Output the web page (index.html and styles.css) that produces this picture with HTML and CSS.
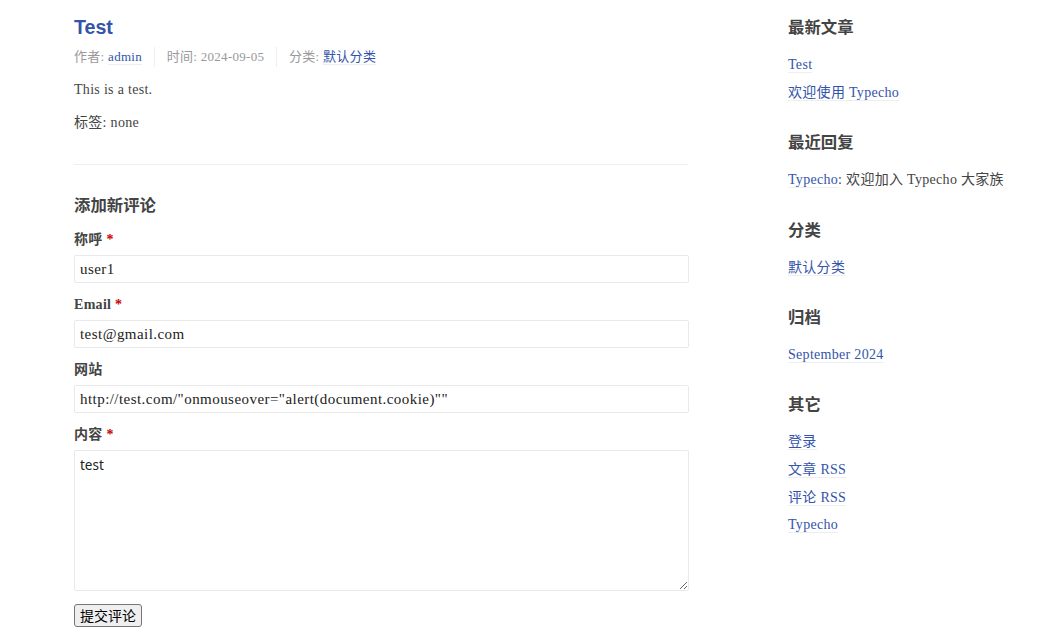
FILE: index.html
```html
<!DOCTYPE html>
<html lang="zh-CN">
<head>
<meta charset="utf-8">
<title>Test</title>
<link rel="stylesheet" href="styles.css">
</head>
<body>
<div class="container">
  <div class="main">
    <article class="post">
      <h2 class="post-title"><a href="#">Test</a></h2>
      <ul class="post-meta">
        <li>作者: <a href="#">admin</a></li>
        <li>时间: 2024-09-05</li>
        <li>分类: <a href="#">默认分类</a></li>
      </ul>
      <div class="post-content"><p>This is a test.</p></div>
      <p class="tags">标签: none</p>
    </article>
    <div class="respond">
      <h3 class="respond-title">添加新评论</h3>
      <form class="comment-form">
        <p class="field"><label class="required">称呼</label><input class="text" type="text" value="user1"></p>
        <p class="field"><label class="required">Email</label><input class="text" type="text" value="test@gmail.com"></p>
        <p class="field"><label>网站</label><input class="text" type="text" value="http://test.com/&quot;onmouseover=&quot;alert(document.cookie)&quot;&quot;"></p>
        <p class="field field-last"><label class="required">内容</label><textarea class="textarea">test</textarea></p>
        <p class="field"><button type="button" class="submit">提交评论</button></p>
      </form>
    </div>
  </div>
  <aside class="secondary">
    <section class="widget">
      <h3 class="widget-title">最新文章</h3>
      <ul class="widget-list">
        <li><a href="#">Test</a></li>
        <li><a href="#">欢迎使用 Typecho</a></li>
      </ul>
    </section>
    <section class="widget">
      <h3 class="widget-title">最近回复</h3>
      <ul class="widget-list">
        <li><a href="#">Typecho</a>: 欢迎加入 Typecho 大家族</li>
      </ul>
    </section>
    <section class="widget">
      <h3 class="widget-title">分类</h3>
      <ul class="widget-list">
        <li><a href="#">默认分类</a></li>
      </ul>
    </section>
    <section class="widget">
      <h3 class="widget-title">归档</h3>
      <ul class="widget-list">
        <li><a href="#">September 2024</a></li>
      </ul>
    </section>
    <section class="widget">
      <h3 class="widget-title">其它</h3>
      <ul class="widget-list">
        <li><a href="#">登录</a></li>
        <li><a href="#">文章 RSS</a></li>
        <li><a href="#">评论 RSS</a></li>
        <li><a href="#">Typecho</a></li>
      </ul>
    </section>
  </aside>
</div>
</body>
</html>
```

FILE: styles.css
```css
html, body {
  margin: 0;
  padding: 0;
  background: #fff;
}
body {
  color: #444;
  font-family: "Liberation Serif", "Noto Sans CJK SC", serif;
  font-size: 14px;
  letter-spacing: 0.3px;
}
a {
  color: #3354AA;
  text-decoration: none;
}
ul {
  list-style: none;
  margin: 0;
  padding: 0;
}
.container {
  display: grid;
  grid-template-columns: 614px 240px;
  column-gap: 100px;
  padding-left: 74px;
}
.post {
  padding-top: 15px;
  padding-bottom: 31px;
  border-bottom: 1px solid #EEE;
}
.post-title {
  margin: 0 0 8px;
  font-family: "Liberation Sans", "Noto Sans CJK SC", sans-serif;
  font-size: 19.6px;
  line-height: 24px;
  letter-spacing: 0;
}
.post-meta {
  color: #999;
  font-size: 13px;
  line-height: 20px;
}
.post-meta li {
  display: inline-block;
  margin-right: 8px;
  padding-left: 12px;
  border-left: 1px solid #EEE;
}
.post-meta li:first-child {
  padding-left: 0;
  border-left: 0;
}
.post-meta a, .widget-list a {
  border-bottom: 1px solid #EEE;
}
.post-content p, .tags {
  margin: 12px 0 0;
  line-height: 21px;
}
.respond-title {
  margin: 28px 0 13px;
  font-family: "Liberation Sans", "Noto Sans CJK SC", sans-serif;
  font-size: 16.4px;
  line-height: 24px;
  letter-spacing: 0;
}
.comment-form .field {
  margin: 0 0 12px;
}
.comment-form .field-last {
  margin-bottom: 13px;
}
.comment-form label {
  display: block;
  font-weight: bold;
  line-height: 20px;
  margin-bottom: 5px;
}
.required::after {
  content: " *";
  color: #C00;
}
.text, .textarea {
  display: block;
  box-sizing: border-box;
  width: 615px;
  margin: 0;
  padding: 5px;
  border: 1px solid #E9E9E9;
  border-radius: 2px;
  background: #fff;
  color: #222;
  outline: none;
}
.text {
  height: 28px;
  font-family: "Liberation Serif", "Noto Sans CJK SC", serif;
  font-size: 15px;
  letter-spacing: 0.45px;
  line-height: 16px;
}
.textarea {
  height: 141px;
  font-family: "Noto Sans", "Noto Sans CJK SC", sans-serif;
  font-size: 13.5px;
  line-height: 18px;
  letter-spacing: 0;
}
.submit {
  display: block;
  height: 23px;
  padding: 0 5px;
  margin: 0;
  font-family: "Noto Sans CJK SC", sans-serif;
  font-size: 14px;
  line-height: 19px;
  letter-spacing: 0;
  color: #000;
  background: #EFEFEF;
  border: 1px solid #767676;
  border-radius: 3px;
}
.secondary {
  padding-top: 15px;
}
.widget {
  margin-bottom: 26px;
}
.widget-title {
  margin: 0 0 15px;
  font-family: "Liberation Sans", "Noto Sans CJK SC", sans-serif;
  font-size: 16.4px;
  line-height: 24px;
  letter-spacing: 0;
}
.widget-list li {
  margin: 5.3px 0 0;
  line-height: 22.4px;
}
```
